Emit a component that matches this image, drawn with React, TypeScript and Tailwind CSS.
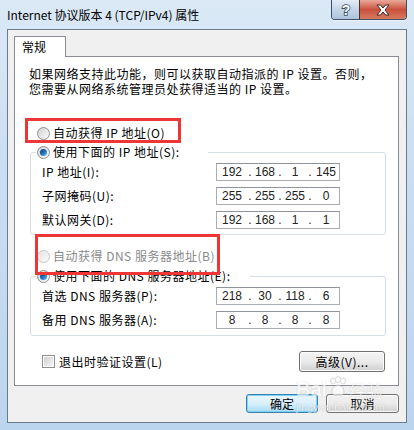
import React from "react";

const FONT = "font-['Noto_Sans_CJK_SC','Noto_Sans',sans-serif]";

function Radio({ checked, disabled }: { checked?: boolean; disabled?: boolean }) {
  return (
    <span
      className={
        disabled
          ? "flex h-[13px] w-[13px] shrink-0 items-center justify-center rounded-full border border-[#c6c6c6] bg-gradient-to-br from-[#e4e4e4] to-[#fbfbfb]"
          : "flex h-[13px] w-[13px] shrink-0 items-center justify-center rounded-full border border-[#8c8e90] bg-gradient-to-br from-[#d2d2d2] to-[#fbfbfb]"
      }
    >
      {checked && (
        <span className="h-[7px] w-[7px] rounded-full bg-gradient-to-br from-[#0b3f78] via-[#1f6fb8] to-[#6cc0f3]" />
      )}
    </span>
  );
}

function IpBox({ v }: { v: [string, string, string, string] }) {
  return (
    <div className="flex h-[18px] w-[124px] shrink-0 items-center border border-[#abadb3] border-t-[#8f939b] bg-white font-['Liberation_Sans',sans-serif] text-[12px] leading-none tracking-normal text-[#222]">
      <span className="w-[30px] text-center">{v[0]}</span>
      <span className="w-[6px] text-center">.</span>
      <span className="w-[24px] text-center">{v[1]}</span>
      <span className="w-[6px] text-center">.</span>
      <span className="w-[24px] text-center">{v[2]}</span>
      <span className="w-[6px] text-center">.</span>
      <span className="w-[26px] text-center">{v[3]}</span>
    </div>
  );
}

function Row({ label, v }: { label: string; v: [string, string, string, string] }) {
  return (
    <div className="flex h-[18px] items-center">
      <span className="w-[174px] shrink-0 whitespace-nowrap text-[12px] leading-none">{label}</span>
      <IpBox v={v} />
    </div>
  );
}

function WinButton({ label, def, w }: { label: string; def?: boolean; w: string }) {
  return (
    <div
      className={
        def
          ? `flex h-[19px] ${w} items-center justify-center rounded-[3px] border border-[#3c7fb1] bg-gradient-to-b from-[#eaf6fd] via-[#d9f0fc] to-[#a7d9f5] text-[12px] leading-none shadow-[inset_0_0_0_1px_#7ad4f7]`
          : `flex h-[19px] ${w} items-center justify-center rounded-[3px] border border-[#707070] bg-gradient-to-b from-[#f2f2f2] via-[#ebebeb] to-[#cfcfcf] text-[12px] leading-none shadow-[inset_0_0_0_1px_#fcfcfc]`
      }
    >
      {label}
    </div>
  );
}

export default function App() {
  return (
    <div
      className={`relative flex h-[430px] w-[414px] flex-col overflow-hidden bg-[linear-gradient(180deg,#dbe9f6_0%,#c9def2_40%,#bcd5ee_100%)] text-black ${FONT}`}
    >
      {/* title bar */}
      <div className="flex h-[29px] shrink-0 items-start justify-between pl-[7px] pr-[7px]">
        <div className="flex h-[29px] items-center whitespace-nowrap text-[12px] leading-none text-black">
          Internet 协议版本 4 (TCP/IPv4) 属性
        </div>
        <div className="flex h-[20px] overflow-hidden rounded-b-[4px] border border-t-0 border-[#3b4f66] shadow-[0_1px_0_#ffffff80]">
          <div className="flex w-[27px] items-center justify-center bg-gradient-to-b from-[#e3ecf6] via-[#c4d5e8] to-[#aec3db]">
            <svg width="12" height="14" viewBox="0 0 12 14">
              <text
                x="6"
                y="12"
                textAnchor="middle"
                fontSize="14"
                fontWeight="bold"
                fontFamily="Liberation Sans, sans-serif"
                fill="#ffffff"
                stroke="#3a4a5c"
                strokeWidth="1.6"
                paintOrder="stroke"
              >
                ?
              </text>
            </svg>
          </div>
          <div className="flex w-[47px] items-center justify-center border-l border-[#5b2a24] bg-gradient-to-b from-[#e9a99b] via-[#c9503c] to-[#d77a5f]">
            <svg width="16" height="12" viewBox="0 0 16 12">
              <path
                d="M2 1 L5.5 1 L8 4 L10.5 1 L14 1 L10 6 L14 11 L10.5 11 L8 8 L5.5 11 L2 11 L6 6 Z"
                fill="#ffffff"
                stroke="#3b2a28"
                strokeWidth="1"
                strokeLinejoin="round"
              />
            </svg>
          </div>
        </div>
      </div>

      {/* client area */}
      <div className="ml-[7px] mr-[7px] flex h-[394px] shrink-0 flex-col border border-[#6d7a8a] bg-[#f0f0f0] pl-[6px] pr-[7px] pt-[6px]">
        {/* tab */}
        <div className="relative z-10 -mb-px flex h-[21px] w-[52px] items-center border border-b-0 border-[#898c95] bg-white pl-[7px] text-[12px] leading-none">
          常规
        </div>
        {/* panel */}
        <div className="flex w-[385px] flex-col border border-[#898c95] bg-white pb-[13px] pt-[9px] text-[12px] tracking-[0.5px]">
          <div className="flex flex-col pl-[14px] text-[12px] leading-[15px]">
            <span className="h-[15px] whitespace-nowrap">如果网络支持此功能，则可以获取自动指派的 IP 设置。否则，</span>
            <span className="h-[15px] whitespace-nowrap">您需要从网络系统管理员处获得适当的 IP 设置。</span>
          </div>

          <div className="mt-[29px] flex h-[16px] items-center gap-[3px] pl-[22px] leading-none">
            <Radio />
            <span className="whitespace-nowrap">自动获得 IP 地址(O)</span>
          </div>

          {/* group 1 */}
          <div className="ml-[15px] mr-[12px] mt-[11px] flex flex-col rounded-[3px] border border-[#d5dfe5] pb-[5px] pl-[11px]">
            <div className="-ml-[6px] -mt-[9px] flex h-[16px] w-[172px] items-center gap-[3px] bg-white pl-[1px] leading-none">
              <Radio checked />
              <span className="whitespace-nowrap">使用下面的 IP 地址(S):</span>
            </div>
            <div className="mt-[3px] flex flex-col gap-[6px]">
              <Row label="IP 地址(I):" v={["192", "168", "1", "145"]} />
              <Row label="子网掩码(U):" v={["255", "255", "255", "0"]} />
              <Row label="默认网关(D):" v={["192", "168", "1", "1"]} />
            </div>
          </div>

          <div className="mt-[13px] flex h-[16px] items-center gap-[3px] pl-[22px] leading-none text-[#8a8a8a]">
            <Radio disabled />
            <span className="whitespace-nowrap">自动获得 DNS 服务器地址(B)</span>
          </div>

          {/* group 2 */}
          <div className="ml-[15px] mr-[12px] mt-[12px] flex flex-col rounded-[3px] border border-[#d5dfe5] pb-[6px] pl-[11px]">
            <div className="-ml-[6px] -mt-[9px] flex h-[16px] w-[214px] items-center gap-[3px] bg-white pl-[1px] leading-none">
              <Radio checked />
              <span className="whitespace-nowrap">使用下面的 DNS 服务器地址(E):</span>
            </div>
            <div className="mt-[3px] flex flex-col gap-[6px]">
              <Row label="首选 DNS 服务器(P):" v={["218", "30", "118", "6"]} />
              <Row label="备用 DNS 服务器(A):" v={["8", "8", "8", "8"]} />
            </div>
          </div>

          <div className="mt-[15px] flex h-[21px] items-center justify-between pl-[27px] pr-[13px]">
            <div className="flex items-center gap-[4px] leading-none">
              <span className="flex h-[13px] w-[13px] items-center justify-center border border-[#8f8f8f] bg-white">
                <span className="h-[9px] w-[9px] bg-gradient-to-br from-[#cfcfcf] to-[#f7f7f7]" />
              </span>
              <span className="whitespace-nowrap">退出时验证设置(L)</span>
            </div>
            <div className="flex h-[21px] w-[86px] items-center justify-center rounded-[3px] border border-[#707070] bg-gradient-to-b from-[#f2f2f2] via-[#ebebeb] to-[#cfcfcf] text-[12px] leading-none shadow-[inset_0_0_0_1px_#fcfcfc]">
              高级(V)...
            </div>
          </div>
        </div>

        {/* bottom buttons */}
        <div className="mt-[8px] flex justify-end gap-[8px]">
          <WinButton label="确定" def w="w-[72px]" />
          <WinButton label="取消" w="w-[73px]" />
        </div>
      </div>

      {/* annotation boxes */}
      <div className="pointer-events-none absolute left-[25px] top-[118px] h-[25px] w-[156px] border-[3px] border-[#ef3636]" />
      <div className="pointer-events-none absolute left-[35px] top-[234px] h-[41px] w-[185px] border-[3px] border-[#ef3636]" />

      {/* watermark */}
      <div className="pointer-events-none absolute left-[296px] top-[376px] flex flex-col items-start opacity-60">
        <div className="flex items-end gap-[1px] text-white [text-shadow:0_0_1px_#9a9a9a]">
          <span className="font-['Liberation_Sans',sans-serif] text-[20px] font-bold leading-none">Bai</span>
          <svg width="20" height="22" viewBox="0 0 20 22" className="mb-[1px]">
            <g fill="#ffffff" stroke="#b0b0b0" strokeWidth="0.8">
              <ellipse cx="5" cy="5" rx="2.5" ry="3" />
              <ellipse cx="10" cy="3.5" rx="2.5" ry="3" />
              <ellipse cx="15" cy="5" rx="2.5" ry="3" />
              <path d="M4 16 C4 11 8 9 10 9 C12 9 16 11 16 16 C16 20 12 20 10 19 C8 20 4 20 4 16 Z" />
            </g>
          </svg>
          <span className="text-[17px] leading-none">经验</span>
        </div>
        <span className="mt-[3px] font-['Liberation_Sans',sans-serif] text-[11px] leading-none text-white [text-shadow:0_0_1px_#8a8a8a]">
          jingyan.baidu.com
        </span>
      </div>
    </div>
  );
}
